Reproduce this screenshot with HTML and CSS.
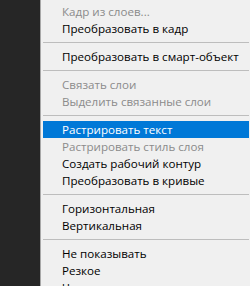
FILE: index.html
```html
<!DOCTYPE html>
<html lang="ru">
<head>
    <meta charset="UTF-8">
    <title>Контекстное меню слоя</title>
    <link rel="stylesheet" href="styles.css">
</head>
<body>
    <div class="workspace">
        <div class="panel"></div>
        <ul class="menu">
            <li class="item disabled">Кадр из слоев...</li>
            <li class="item">Преобразовать в кадр</li>
            <li class="sep"></li>
            <li class="item">Преобразовать в смарт-объект</li>
            <li class="sep"></li>
            <li class="item disabled">Связать слои</li>
            <li class="item disabled">Выделить связанные слои</li>
            <li class="sep"></li>
            <li class="item active">Растрировать текст</li>
            <li class="item disabled">Растрировать стиль слоя</li>
            <li class="item">Создать рабочий контур</li>
            <li class="item">Преобразовать в кривые</li>
            <li class="sep"></li>
            <li class="item">Горизонтальная</li>
            <li class="item">Вертикальная</li>
            <li class="sep"></li>
            <li class="item">Не показывать</li>
            <li class="item">Резкое</li>
            <li class="item">Четкое</li>
        </ul>
    </div>
</body>
</html>
```

FILE: styles.css
```css
html, body {
    margin: 0;
    padding: 0;
    height: 100%;
    overflow: hidden;
}
body {
    font-family: "Open Sans", "Liberation Sans", Arial, sans-serif;
    font-size: 11.6px;
    background-color: #f0f0f0;
}
.workspace {
    display: flex;
    height: 100%;
}
.panel {
    width: 40px;
    flex-shrink: 0;
    background-color: #262626;
}
.menu {
    flex: 1;
    margin: 0;
    padding: 3px 1px 0 2px;
    list-style: none;
    background-color: #f0f0f0;
    border-left: 1px solid #a8a8a8;
}
.item {
    height: 17px;
    line-height: 17px;
    padding-left: 19px;
    color: #000;
    white-space: nowrap;
}
.item.disabled {
    color: #8b8b8b;
}
.item.active {
    background-color: #0078d7;
    color: #fff;
}
.sep {
    height: 1px;
    margin: 5px 0;
    background-color: #bdbdbd;
}
```
